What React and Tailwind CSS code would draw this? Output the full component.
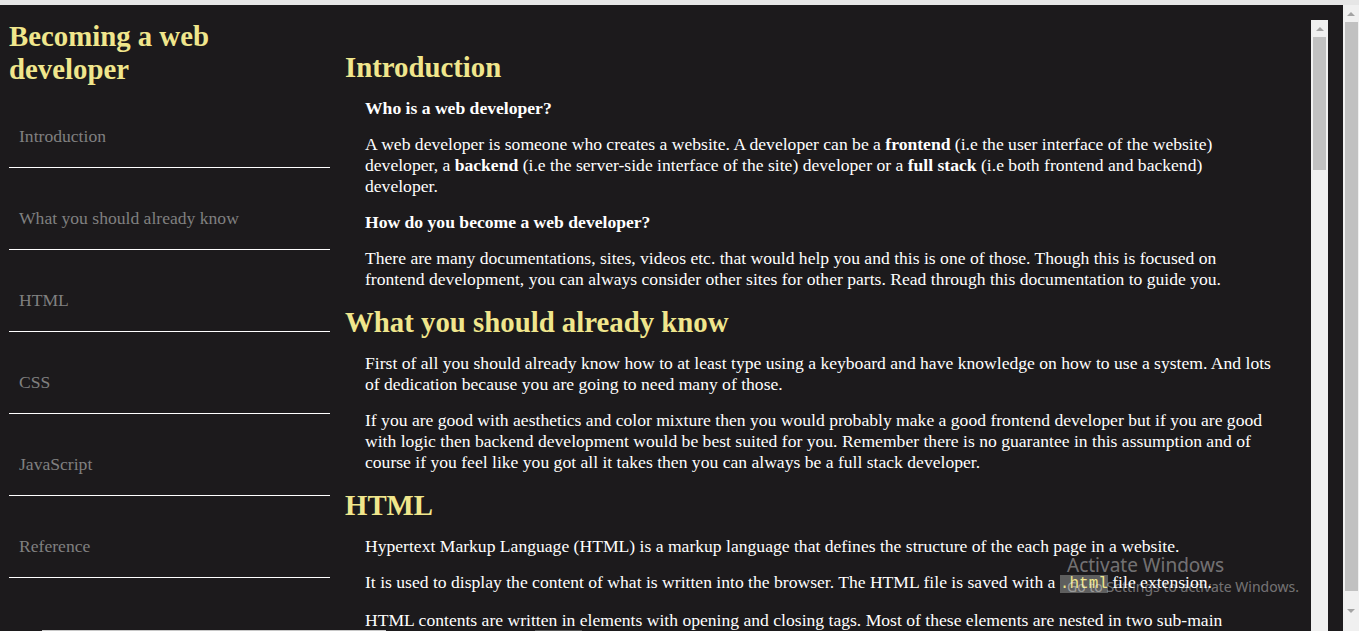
import React from 'react';

const navItems = ['Introduction', 'What you should already know', 'HTML', 'CSS', 'JavaScript', 'Reference'];

function ArrowUp() {
  return <div className="w-0 h-0 border-l-[4px] border-r-[4px] border-b-[4px] border-l-transparent border-r-transparent border-b-[#a3a3a3]" />;
}

function ArrowDown() {
  return <div className="w-0 h-0 border-l-[4px] border-r-[4px] border-t-[4px] border-l-transparent border-r-transparent border-t-[#a3a3a3]" />;
}

function Para({ children }) {
  return <p className="pl-[20px] text-[17.6px] leading-[21px] text-white">{children}</p>;
}

function Heading({ children, first }) {
  return (
    <h2 className={`${first ? '' : 'mt-[16px]'} mb-[-1px] text-[28.8px] leading-[33px] font-bold text-[#f0e68c]`}>
      {children}
    </h2>
  );
}

export default function App() {
  return (
    <div className="w-[1359px] h-[631px] overflow-hidden flex flex-col bg-[#1c1a1c] font-['Liberation_Serif','Times_New_Roman',serif]">
      {/* top window edge */}
      <div className="h-[5px] shrink-0 bg-[#e6e6e6]" />

      <div className="flex flex-1 min-h-0">
        {/* page */}
        <div className="flex flex-1 min-w-0">
          <div className="flex flex-col w-[1311px] min-h-0">
            <div className="flex flex-1 min-h-0 overflow-hidden">
              {/* Sidebar nav */}
              <nav className="w-[345px] shrink-0 pl-[9px]">
                <h1 className="mt-[15px] w-[300px] text-[28.8px] leading-[33px] font-bold text-[#f0e68c]">
                  Becoming a web developer
                </h1>
                <ul className="w-[321px]">
                  {navItems.map(item => (
                    <li key={item} className="h-[82px] border-b border-white pt-[40px] pl-[10px]">
                      <a className="block text-[17.6px] leading-[20px] text-[#808080]">{item}</a>
                    </li>
                  ))}
                </ul>
              </nav>

              {/* Main documentation */}
              <main className="flex-1 min-w-0 pt-[46px] pr-[36px] flex flex-col">
                <section className="flex flex-col gap-[15px]">
                  <Heading first>Introduction</Heading>
                  <Para><b>Who is a web developer?</b></Para>
                  <Para>
                    A web developer is someone who creates a website. A developer can be a <b>frontend</b> (i.e the user
                    interface of the website) developer, a <b>backend</b> (i.e the server-side interface of the site)
                    developer or a <b>full stack</b> (i.e both frontend and backend) developer.
                  </Para>
                  <Para><b>How do you become a web developer?</b></Para>
                  <Para>
                    There are many documentations, sites, videos etc. that would help you and this is one of those.
                    Though this is focused on frontend development, you can always consider other sites for other
                    parts. Read through this documentation to guide you.
                  </Para>
                </section>
                <section className="flex flex-col gap-[15px]">
                  <Heading>What you should already know</Heading>
                  <Para>
                    First of all you should already know how to at least type using a keyboard and have knowledge on
                    how to use a system. And lots of dedication because you are going to need many of those.
                  </Para>
                  <Para>
                    If you are good with aesthetics and color mixture then you would probably make a good frontend
                    developer but if you are good with logic then backend development would be best suited for you.
                    Remember there is no guarantee in this assumption and of course if you feel like you got all it
                    takes then you can always be a full stack developer.
                  </Para>
                </section>
                <section className="flex flex-col gap-[15px]">
                  <Heading>HTML</Heading>
                  <Para>
                    Hypertext Markup Language (HTML) is a markup language that defines the structure of the each page
                    in a website.
                  </Para>
                  <Para>
                    It is used to display the content of what is written into the browser. The HTML file is saved with
                    a{' '}
                    <code className="bg-[#5e5e5e] text-[#f0e68c] text-[16px] font-['Liberation_Mono','Courier_New',monospace]">
                      .html
                    </code>{' '}
                    file extension.
                  </Para>
                  <Para>
                    HTML contents are written in elements with opening and closing tags. Most of these elements are
                    nested in two sub-main sections: the head and the body.
                  </Para>
                </section>
              </main>
            </div>
            {/* bottom scrollbar edge */}
            <div className="h-px shrink-0 flex">
              <div className="ml-[42px] w-[344px] bg-[#c8c8c8]" />
              <div className="ml-[149px] w-[47px] bg-[#555555]" />
            </div>
          </div>

          {/* inner scrollbar */}
          <div className="w-[17px] shrink-0 mt-[15px] bg-[#f0f0f0] flex flex-col items-center">
            <div className="h-[17px] flex items-center justify-center"><ArrowUp /></div>
            <div className="w-[13px] h-[133px] bg-[#c1c1c1]" />
          </div>
        </div>

        {/* outer scrollbar */}
        <div className="w-[16px] shrink-0 ml-[15px] bg-[#f0f0f0] flex flex-col items-center">
          <div className="h-[17px] flex items-center justify-center"><ArrowUp /></div>
          <div className="w-[13px] flex-1 bg-[#c1c1c1]" />
          <div className="h-[40px] flex items-center justify-center"><ArrowDown /></div>
        </div>
      </div>

      {/* Windows activation watermark */}
      <div className="absolute left-[1067px] top-[553px] pointer-events-none font-['Noto_Sans',sans-serif] text-[rgba(255,255,255,0.4)]">
        <div className="text-[19px] leading-[24px]">Activate Windows</div>
        <div className="text-[14px] leading-[20px]">Go to Settings to activate Windows.</div>
      </div>
    </div>
  );
}
